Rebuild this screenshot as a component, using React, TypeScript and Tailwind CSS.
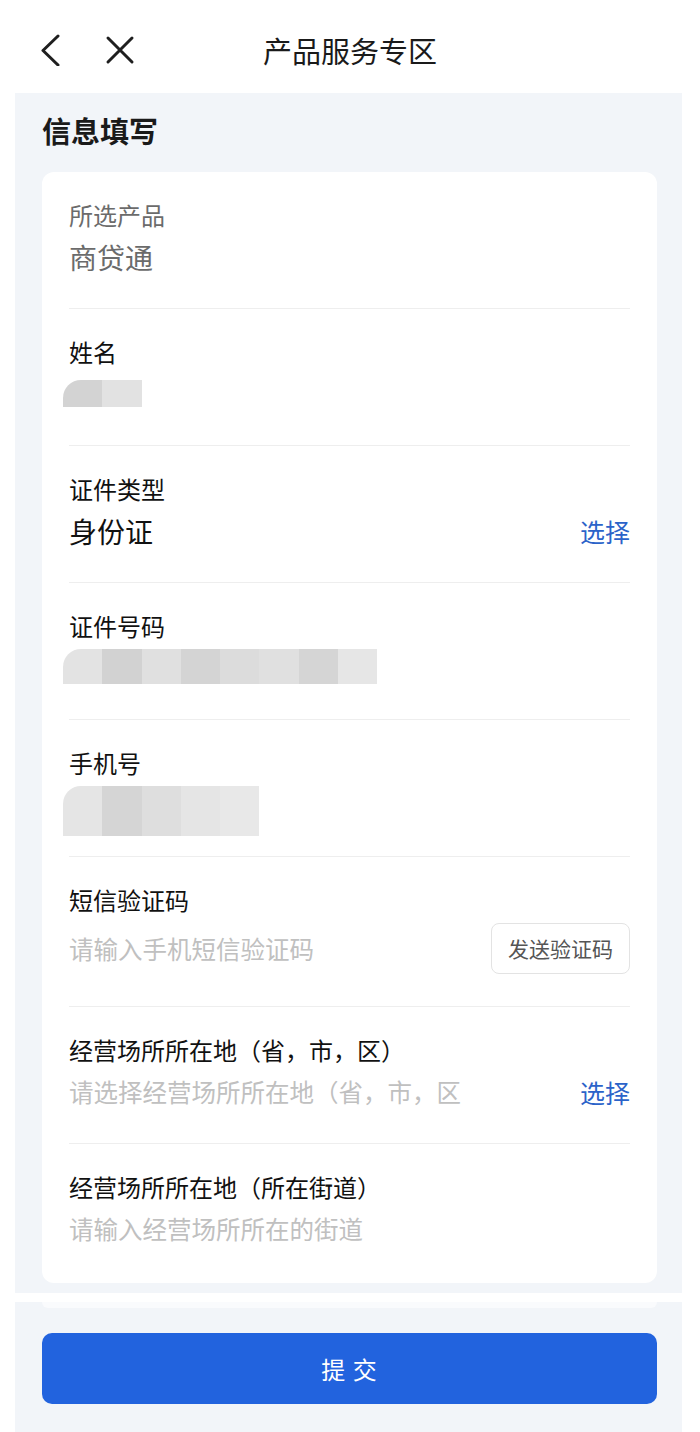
import React from "react";

const font = { fontFamily: '"Noto Sans CJK SC", "Noto Sans", sans-serif' };

function Mosaic({ colors, className }: { colors: string[]; className: string }) {
  return (
    <div className={"flex -ml-[6px] " + className}>
      {colors.map((c, i) => (
        <div
          key={i}
          className={"h-full w-[39.3px] " + (i === 0 ? "rounded-tl-[18px]" : "")}
          style={{ backgroundColor: c }}
        />
      ))}
    </div>
  );
}

function Row({
  label,
  children,
  muted,
  height = "h-[137px]",
  last,
}: {
  label: string;
  children?: React.ReactNode;
  muted?: boolean;
  height?: string;
  last?: boolean;
}) {
  return (
    <div className={`${height} pt-[28px] ${last ? "" : "border-b border-[#eeeeee]"}`}>
      <div className={`text-[24px] leading-[30px] ${muted ? "text-[#6b6b6b]" : "text-[#111111]"}`}>
        {label}
      </div>
      {children}
    </div>
  );
}

export default function App() {
  return (
    <div className="w-[700px] h-[1432px] bg-white overflow-hidden" style={font}>
      {/* Header */}
      <div className="h-[93px] pt-[6px] grid grid-cols-3 items-center">
        <div className="flex items-center pl-[40px] gap-[42px]">
          <svg width="22" height="32" viewBox="0 0 22 32" fill="none">
            <path d="M18 2 L3 16.5 L18 31" stroke="#1f1f1f" strokeWidth="3" strokeLinecap="round" strokeLinejoin="round" />
          </svg>
          <svg width="32" height="32" viewBox="0 0 32 32" fill="none">
            <path d="M4 4 L28 28 M28 4 L4 28" stroke="#1f1f1f" strokeWidth="3" strokeLinecap="round" />
          </svg>
        </div>
        <div className="text-center text-[29px] leading-[40px] text-[#1a1a1a] whitespace-nowrap">产品服务专区</div>
        <div />
      </div>

      {/* Content */}
      <div className="ml-[15px] w-[667px] bg-[#f2f5f9] pl-[27px] pr-[25px] pt-[17px] pb-[10px]">
        <h1 className="text-[29px] leading-[40px] font-bold text-[#1a1a1a]">信息填写</h1>
        <div className="mt-[22px] bg-white rounded-[12px] px-[27px]">
          <Row label="所选产品" muted>
            <div className="mt-[10px] text-[28px] leading-[34px] text-[#6b6b6b]">商贷通</div>
          </Row>

          <Row label="姓名">
            <Mosaic colors={["#d3d3d3", "#e2e2e2"]} className="mt-[13px] h-[27px]" />
          </Row>

          <Row label="证件类型">
            <div className="mt-[10px] flex items-center justify-between">
              <div className="text-[28px] leading-[34px] text-[#111111]">身份证</div>
              <div className="text-[25px] leading-[34px] text-[#2b63c9]">选择</div>
            </div>
          </Row>

          <Row label="证件号码">
            <Mosaic
              colors={["#e3e3e3", "#d2d2d2", "#e0e0e0", "#d4d4d4", "#dcdcdc", "#e0e0e0", "#d5d5d5", "#e6e6e6"]}
              className="mt-[8px] h-[35px]"
            />
          </Row>

          <Row label="手机号">
            <Mosaic
              colors={["#e5e5e5", "#d5d5d5", "#dedede", "#e5e5e5", "#e8e8e8"]}
              className="mt-[8px] h-[50px]"
            />
          </Row>

          <Row label="短信验证码" height="h-[150px]">
            <div className="mt-[8px] flex items-center justify-between">
              <div className="text-[24.5px] leading-[34px] text-[#c0c0c0]">请输入手机短信验证码</div>
              <div className="h-[51px] w-[139px] border border-[#e3e3e3] rounded-[8px] flex items-center justify-center text-[21px] text-[#555555]">
                发送验证码
              </div>
            </div>
          </Row>

          <Row label="经营场所所在地（省，市，区）">
            <div className="mt-[10px] flex items-center justify-between">
              <div className="text-[24.5px] leading-[34px] text-[#c0c0c0] whitespace-nowrap">请选择经营场所所在地（省，市，区</div>
              <div className="text-[25px] leading-[34px] text-[#2b63c9]">选择</div>
            </div>
          </Row>

          <Row label="经营场所所在地（所在街道）" height="h-[139px]" last>
            <div className="mt-[10px] text-[24.5px] leading-[34px] text-[#c0c0c0]">请输入经营场所所在的街道</div>
          </Row>
        </div>
      </div>

      {/* Footer */}
      <div className="mt-[9px] ml-[15px] w-[667px] h-[130px] bg-[#f2f5f9] pl-[27px] pr-[25px]">
        <div className="h-[6px] bg-[#fafbfd] rounded-b-[6px]" />
        <button className="mt-[25px] w-full h-[71px] rounded-[10px] bg-[#2263de] text-white text-[24px] tracking-[1px]">
          提 交
        </button>
      </div>
    </div>
  );
}
